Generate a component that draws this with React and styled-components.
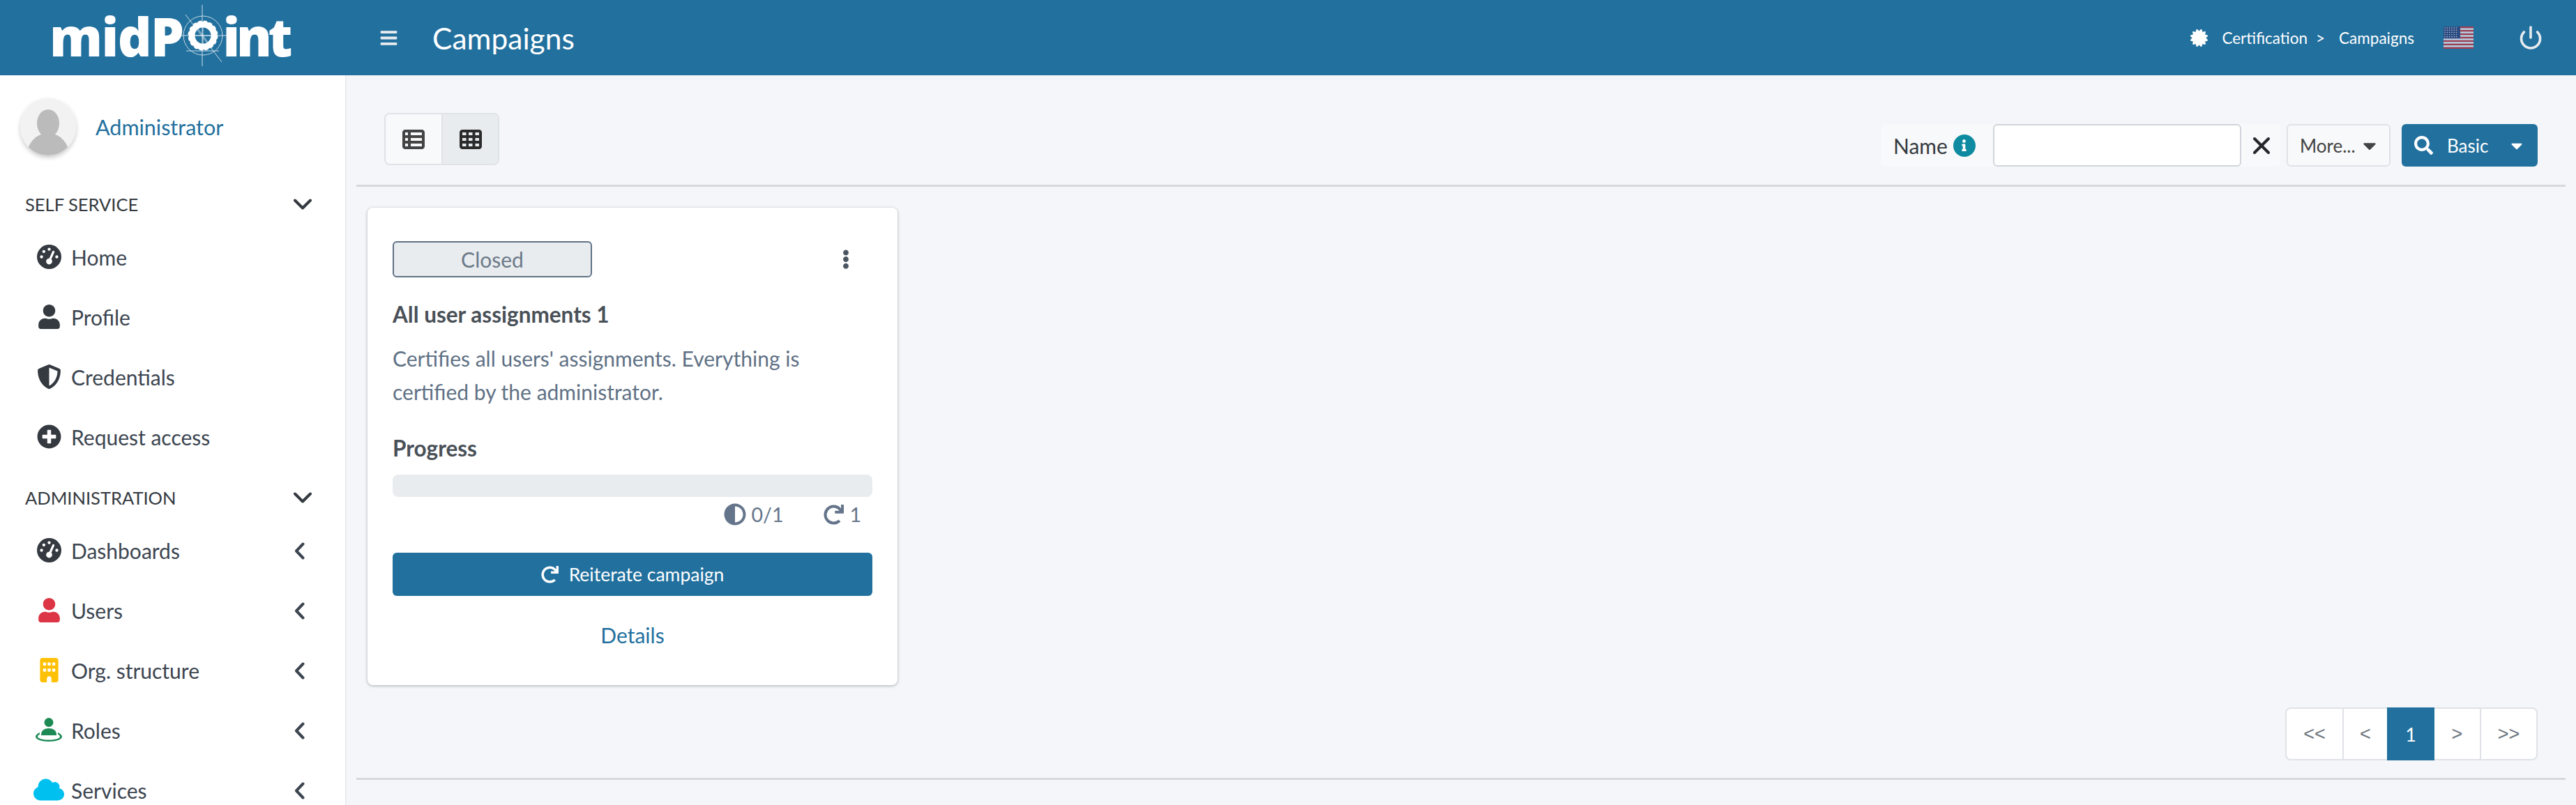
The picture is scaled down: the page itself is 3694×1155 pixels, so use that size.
import React from 'react'
import styled, { createGlobalStyle } from 'styled-components'
import {
  FaUser, FaShieldAlt, FaPlusCircle, FaCloud, FaBars, FaCertificate, FaEllipsisV, FaAdjust, FaRedo,
  FaSearch, FaCaretDown, FaInfo,
} from 'react-icons/fa'
import { FaTableList, FaTableCells, FaGaugeHigh, FaBuilding } from 'react-icons/fa6'
import { Power, X } from 'lucide-react'

const PRIMARY = '#22709e'

const GlobalStyle = createGlobalStyle`
  html, body {
    margin: 0;
    height: 100%;
    overflow: hidden;
    background: #f4f6f9;
  }
  * {
    box-sizing: border-box;
  }
  body {
    font-family: Lato, "Noto Sans", sans-serif;
    color: #343a40;
  }
`

const Page = styled.div`
  height: 1155px;
  overflow: hidden;
  display: flex;
  flex-direction: column;
`

const Header = styled.header`
  height: 108px;
  flex: none;
  background: ${PRIMARY};
  display: flex;
  align-items: center;
  color: #fff;
`

const Logo = styled.div`
  width: 495px;
  flex: none;
  height: 108px;
  padding-left: 71px;
  display: flex;
  align-items: center;
  font-family: "Open Sans", sans-serif;
  font-weight: 800;
  font-size: 76px;
  line-height: 108px;
  color: #fff;
`

const LogoWord = styled.span`
  display: block;
  margin-top: -4px;
  letter-spacing: ${(p) => p.$spacing}px;
`

const LogoMark = styled.svg`
  width: 58px;
  height: 90px;
  flex: none;
  overflow: visible;
  margin: 4px 0 0 -1px;
`

const Burger = styled.div`
  margin-left: 49px;
  width: 27px;
  display: flex;
  color: #e9ecef;
  font-size: 27px;
`

const PageTitle = styled.div`
  margin-left: 49px;
  font-size: 42.5px;
  color: #fff;
`

const Crumbs = styled.div`
  margin-left: auto;
  display: flex;
  align-items: center;
  font-size: 22.5px;
  color: #fff;
`

const CrumbText = styled.span`
  margin-left: ${(p) => p.$gap}px;
`

const Flag = styled.svg`
  width: 43px;
  height: 32px;
  margin-left: 42px;
  opacity: 0.92;
`

const PowerWrap = styled.div`
  margin: 0 47px 0 64px;
  display: flex;
  color: #e9ecef;
`

const Body = styled.div`
  flex: 1;
  display: flex;
  min-height: 0;
`

const Sidebar = styled.aside`
  width: 495px;
  flex: none;
  background: #fff;
  box-shadow: 1px 0 2px rgba(0, 0, 0, 0.08);
`

const UserPanel = styled.div`
  height: 143px;
  padding: 33px 0 0 29px;
  display: flex;
  align-items: flex-start;
`

const Avatar = styled.svg`
  width: 80px;
  height: 82px;
  flex: none;
  border-radius: 50%;
  box-shadow: 0 3px 6px rgba(0, 0, 0, 0.22);
`

const UserName = styled.a`
  margin: 23px 0 0 28px;
  font-size: 30.5px;
  color: ${PRIMARY};
`

const SectionRow = styled.div`
  height: 77px;
  padding: 7px 48px 0 36px;
  display: flex;
  align-items: center;
  justify-content: space-between;
  font-size: 25.5px;
  color: #343a40;
`

const Chevron = styled.svg`
  flex: none;
  fill: none;
  stroke: ${(p) => p.$color};
  stroke-width: 4;
  stroke-linecap: round;
  stroke-linejoin: round;
`

const NavRow = styled.div`
  height: 86px;
  padding: 0 58px 4px 48px;
  display: flex;
  align-items: center;
  font-size: 30px;
  color: #3c4550;
`

const NavIcon = styled.div`
  width: 44px;
  height: 44px;
  margin: -2px 10px 0 0;
  flex: none;
  display: flex;
  align-items: center;
  justify-content: center;
  color: ${(p) => p.$color || '#343a40'};
  font-size: ${(p) => p.$size || 35}px;
`

const NavLabel = styled.span`
  flex: 1;
`

const Main = styled.main`
  flex: 1;
  min-width: 0;
  padding: 0 15px 0 16px;
`

const Toolbar = styled.div`
  height: 160px;
  padding: 54px 40px 0 40px;
  display: flex;
  align-items: flex-start;
  justify-content: space-between;
  border-bottom: 3px solid #d6d8dd;
`

const ViewToggle = styled.div`
  display: flex;
  height: 75px;
  border: 2px solid #dfe2e6;
  border-radius: 8px;
  overflow: hidden;
`

const ViewButton = styled.div`
  width: ${(p) => (p.$active ? 81 : 80)}px;
  display: flex;
  align-items: center;
  justify-content: center;
  font-size: 32px;
  background: ${(p) => (p.$active ? '#e9ecef' : '#f8f9fa')};
  color: ${(p) => (p.$active ? '#2b2b2b' : '#444')};
  & + & {
    border-left: 2px solid #dfe2e6;
  }
`

const Search = styled.div`
  margin-top: 16px;
  display: flex;
  align-items: stretch;
  height: 61px;
`

const SearchField = styled.div`
  width: 572px;
  padding-left: 17px;
  display: flex;
  align-items: center;
  background: #f8f9fa;
  border-radius: 6px;
  font-size: 30px;
  color: #343a40;
`

const InfoDot = styled.span`
  width: 32px;
  height: 32px;
  margin-left: 8px;
  flex: none;
  border-radius: 50%;
  display: flex;
  align-items: center;
  justify-content: center;
  background: #0e8ba0;
  color: #fff;
  font-size: 17px;
`

const NameInput = styled.input`
  width: 356px;
  height: 61px;
  margin-left: 25px;
  flex: none;
  border: 2px solid #d1d5db;
  border-radius: 6px;
  background: #fff;
  outline: none;
`

const ClearIcon = styled.div`
  margin-left: 9px;
  display: flex;
  color: #23272b;
`

const MoreButton = styled.div`
  width: 149px;
  margin-left: 9px;
  padding: 0 13px 0 17px;
  display: flex;
  align-items: center;
  justify-content: space-between;
  background: #f8f9fa;
  border: 2px solid #dfe2e6;
  border-radius: 6px;
  font-size: 26px;
  color: #444;
`

const BasicButton = styled.div`
  width: 195px;
  margin-left: 16px;
  padding: 0 17px 0 18px;
  display: flex;
  align-items: center;
  background: ${PRIMARY};
  border-radius: 6px;
  font-size: 26px;
  color: #fff;
`

const BasicLabel = styled.span`
  margin-left: 20px;
  flex: 1;
`

const CardArea = styled.div`
  padding: 30px 0 0 16px;
`

const Card = styled.article`
  width: 760px;
  padding: 48px 36px 50px;
  background: #fff;
  border-radius: 8px;
  box-shadow: 0 1px 4px rgba(0, 0, 0, 0.3);
`

const CardTop = styled.div`
  display: flex;
  align-items: center;
  justify-content: space-between;
`

const StatusBadge = styled.div`
  width: 286px;
  height: 52px;
  display: flex;
  align-items: center;
  justify-content: center;
  background: #e9ecef;
  border: 2px solid #5f7185;
  border-radius: 6px;
  font-size: 30px;
  color: #6c7a89;
`

const Kebab = styled.div`
  margin-right: 24px;
  display: flex;
  color: #495561;
  font-size: 28px;
`

const CardTitle = styled.h3`
  margin: 31px 0 0;
  font-size: 31.5px;
  font-weight: 700;
  line-height: 44px;
  color: #495057;
`

const CardText = styled.p`
  margin: 18px 0 0;
  font-size: 30px;
  line-height: 47.5px;
  color: #5f7185;
`

const ProgressLabel = styled.h4`
  margin: 35px 0 0;
  font-size: 31.5px;
  font-weight: 700;
  line-height: 44px;
  color: #495057;
`

const ProgressBar = styled.div`
  height: 32px;
  margin-top: 16px;
  background: #e9ecef;
  border-radius: 8px;
`

const Stats = styled.div`
  height: 40px;
  margin-top: 5px;
  padding-right: 16px;
  display: flex;
  align-items: center;
  justify-content: flex-end;
  gap: 58px;
  font-size: 28.5px;
  color: #64748a;
`

const Stat = styled.span`
  display: flex;
  align-items: center;
  gap: 8px;
`

const ActionButton = styled.div`
  height: 62px;
  margin-top: 35px;
  display: flex;
  align-items: center;
  justify-content: center;
  gap: 15px;
  background: ${PRIMARY};
  border-radius: 6px;
  font-size: 26.5px;
  color: #fff;
`

const DetailsLink = styled.a`
  display: block;
  margin-top: 34px;
  text-align: center;
  font-size: 30px;
  line-height: 44px;
  color: ${PRIMARY};
`

const PagerRow = styled.div`
  height: 136px;
  padding: 32px 40px 0 0;
  display: flex;
  justify-content: flex-end;
  align-items: flex-start;
  border-bottom: 3px solid #d6d8dd;
`

const Pager = styled.div`
  height: 76px;
  display: flex;
  background: #fff;
  border: 2px solid #dfe2e6;
  border-radius: 8px;
`

const PageCell = styled.div`
  width: ${(p) => p.$width}px;
  margin: ${(p) => (p.$active ? '-2px 0' : '0')};
  display: flex;
  align-items: center;
  justify-content: center;
  font-family: ${(p) => (p.$active ? 'inherit' : '"Liberation Sans", sans-serif')};
  font-size: 27px;
  background: ${(p) => (p.$active ? PRIMARY : 'transparent')};
  color: ${(p) => (p.$active ? '#fff' : '#6c757d')};
  border-left: ${(p) => (p.$divided ? '2px solid #dfe2e6' : 'none')};
`

function Gear() {
  return (
    <LogoMark viewBox="0 0 58 90">
      <g stroke="#fff" fill="none" opacity="0.75" strokeWidth="1">
        <path d="M28 -4V84M-10 40H64M4 10L56 78" />
        <circle cx="29" cy="40" r="28" />
        <path d="M5 62H52" />
      </g>
      <circle cx="29" cy="40" r="16" stroke="#fff" strokeWidth="9" fill="none" />
      <circle cx="29" cy="40" r="19.5" stroke="#fff" strokeWidth="4" strokeDasharray="4.5 3.2" fill="none" />
      <path d="M29 26V54M15 40H43M20 28L38 52" stroke="#fff" strokeWidth="1" opacity="0.7" />
    </LogoMark>
  )
}

function UsFlag() {
  const stripes = [0, 1, 2, 3, 4, 5, 6]
  const dots = []
  for (let r = 0; r < 5; r++) {
    for (let c = 0; c < 6; c++) {
      dots.push(<circle key={`${r}-${c}`} cx={2 + c * 3.3} cy={2 + r * 3.2} r="0.7" fill="#dfe6ee" />)
    }
  }
  return (
    <Flag viewBox="0 0 43 32">
      <rect width="43" height="32" fill="#c3dcec" />
      {stripes.map((s) => (
        <rect key={s} y={s * 4.92} width="43" height="2.46" fill="#a63a4c" />
      ))}
      <rect width="24" height="17.2" fill="#2f4a80" />
      {dots}
    </Flag>
  )
}

function RoleIcon() {
  return (
    <svg width="38" height="34" viewBox="0 0 38 34" fill="currentColor">
      <circle cx="19" cy="6.5" r="6.5" />
      <path d="M8 24c0-6 5-9 11-9s11 3 11 9v1H8z" />
      <path d="M6 21C2.500 22.500 0 24.500 0 27c0 4 8.500 7 19 7s19-3 19-7c0-2.500-2.500-4.500-6-6v2.500c1.500.8 3 2 3 3.500 0 2.500-7 4.500-16 4.500S3 29.500 3 27c0-1.500 1.500-2.700 3-3.500z" />
    </svg>
  )
}

function ChevronDown() {
  return (
    <Chevron $color="#343a40" width="26" height="16" viewBox="0 0 26 16">
      <path d="M2 2.500L13 13.500L24 2.500" />
    </Chevron>
  )
}

function ChevronLeft() {
  return (
    <Chevron $color="#3c4550" width="15" height="25" viewBox="0 0 15 25">
      <path d="M12.500 2.500L3 12.500L12.500 22.500" />
    </Chevron>
  )
}

const selfService = [
  { label: 'Home', icon: <FaGaugeHigh /> },
  { label: 'Profile', icon: <FaUser /> },
  { label: 'Credentials', icon: <FaShieldAlt /> },
  { label: 'Request access', icon: <FaPlusCircle /> },
]

const administration = [
  { label: 'Dashboards', icon: <FaGaugeHigh /> },
  { label: 'Users', icon: <FaUser />, color: '#dc3545' },
  { label: 'Org. structure', icon: <FaBuilding />, color: '#ffc107' },
  { label: 'Roles', icon: <RoleIcon />, color: '#1d8a55' },
  { label: 'Services', icon: <FaCloud />, color: '#00c0ef', size: 44 },
]

function NavItem({ item, arrow }) {
  return (
    <NavRow>
      <NavIcon $color={item.color} $size={item.size}>{item.icon}</NavIcon>
      <NavLabel>{item.label}</NavLabel>
      {arrow && <ChevronLeft />}
    </NavRow>
  )
}

function App() {
  return (
    <Page>
      <GlobalStyle />
      <Header>
        <Logo>
          <LogoWord $spacing={-1.5}>midP</LogoWord>
          <Gear />
          <LogoWord $spacing={-5.4}>int</LogoWord>
        </Logo>
        <Burger><FaBars /></Burger>
        <PageTitle>Campaigns</PageTitle>
        <Crumbs>
          <FaCertificate size={25} />
          <CrumbText $gap={20}>Certification</CrumbText>
          <CrumbText $gap={12}>&gt;</CrumbText>
          <CrumbText $gap={20}>Campaigns</CrumbText>
          <UsFlag />
          <PowerWrap><Power size={36} strokeWidth={2.4} /></PowerWrap>
        </Crumbs>
      </Header>
      <Body>
        <Sidebar>
          <UserPanel>
            <Avatar viewBox="0 0 80 82">
              <rect width="80" height="82" fill="#f2f2f2" />
              <ellipse cx="40" cy="36" rx="16" ry="20" fill="#bbb" />
              <ellipse cx="40" cy="84" rx="31" ry="34" fill="#bbb" />
            </Avatar>
            <UserName>Administrator</UserName>
          </UserPanel>
          <SectionRow>SELF SERVICE<ChevronDown /></SectionRow>
          {selfService.map((item) => <NavItem key={item.label} item={item} />)}
          <SectionRow>ADMINISTRATION<ChevronDown /></SectionRow>
          {administration.map((item) => <NavItem key={item.label} item={item} arrow />)}
        </Sidebar>
        <Main>
          <Toolbar>
            <ViewToggle>
              <ViewButton><FaTableList /></ViewButton>
              <ViewButton $active><FaTableCells /></ViewButton>
            </ViewToggle>
            <Search>
              <SearchField>
                Name
                <InfoDot><FaInfo /></InfoDot>
                <NameInput />
                <ClearIcon><X size={40} strokeWidth={2.4} /></ClearIcon>
              </SearchField>
              <MoreButton>More...<FaCaretDown size={30} /></MoreButton>
              <BasicButton>
                <FaSearch size={27} />
                <BasicLabel>Basic</BasicLabel>
                <FaCaretDown />
              </BasicButton>
            </Search>
          </Toolbar>
          <CardArea>
            <Card>
              <CardTop>
                <StatusBadge>Closed</StatusBadge>
                <Kebab><FaEllipsisV /></Kebab>
              </CardTop>
              <CardTitle>All user assignments 1</CardTitle>
              <CardText>Certifies all users' assignments. Everything is certified by the administrator.</CardText>
              <ProgressLabel>Progress</ProgressLabel>
              <ProgressBar />
              <Stats>
                <Stat><FaAdjust size={32} />0/1</Stat>
                <Stat><FaRedo size={29} />1</Stat>
              </Stats>
              <ActionButton><FaRedo size={25} />Reiterate campaign</ActionButton>
              <DetailsLink>Details</DetailsLink>
            </Card>
          </CardArea>
          <PagerRow>
            <Pager>
              <PageCell $width={80}>&lt;&lt;</PageCell>
              <PageCell $width={64} $divided>&lt;</PageCell>
              <PageCell $width={68} $active>1</PageCell>
              <PageCell $width={65}>&gt;</PageCell>
              <PageCell $width={81} $divided>&gt;&gt;</PageCell>
            </Pager>
          </PagerRow>
        </Main>
      </Body>
    </Page>
  )
}

export default App
